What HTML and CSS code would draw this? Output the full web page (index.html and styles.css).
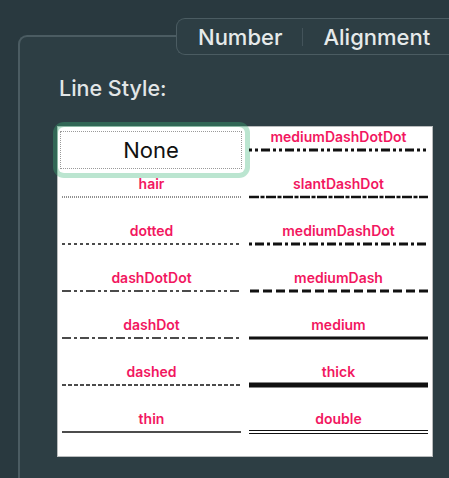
FILE: index.html
```html
<!DOCTYPE html>
<html lang="en">
<head>
  <meta charset="UTF-8" />
  <title>Format Cells - Border</title>
  <link rel="stylesheet" href="styles.css">
</head>
<body>
  <div class="pane">
    <div class="tabs">
      <span class="tab">Number</span>
      <span class="sep"></span>
      <span class="tab">Alignment</span>
    </div>

    <div class="title">Line Style:</div>

    <div class="styles">
      <div class="cell cell-none">
        <button class="none"><span>None</span></button>
      </div>
      <div class="cell">
        <span class="name">mediumDashDotDot</span>
        <svg class="ln mddd" viewBox="0 0 179 6"><line x1="0" y1="3" x2="179" y2="3" /></svg>
      </div>

      <div class="cell">
        <span class="name">hair</span>
        <svg class="ln hair" viewBox="0 0 179 6"><line x1="0" y1="3" x2="179" y2="3" /></svg>
      </div>
      <div class="cell">
        <span class="name">slantDashDot</span>
        <svg class="ln slant" viewBox="0 0 179 6"><line x1="0" y1="3" x2="179" y2="3" /></svg>
      </div>

      <div class="cell">
        <span class="name">dotted</span>
        <svg class="ln dotted" viewBox="0 0 179 6"><line x1="0" y1="3" x2="179" y2="3" /></svg>
      </div>
      <div class="cell">
        <span class="name">mediumDashDot</span>
        <svg class="ln mdd" viewBox="0 0 179 6"><line x1="0" y1="3" x2="179" y2="3" /></svg>
      </div>

      <div class="cell">
        <span class="name">dashDotDot</span>
        <svg class="ln ddd" viewBox="0 0 179 6"><line x1="0" y1="3" x2="179" y2="3" /></svg>
      </div>
      <div class="cell">
        <span class="name">mediumDash</span>
        <svg class="ln mdash" viewBox="0 0 179 6"><line x1="0" y1="3" x2="179" y2="3" /></svg>
      </div>

      <div class="cell">
        <span class="name">dashDot</span>
        <svg class="ln dd" viewBox="0 0 179 6"><line x1="0" y1="3" x2="179" y2="3" /></svg>
      </div>
      <div class="cell">
        <span class="name">medium</span>
        <svg class="ln medium" viewBox="0 0 179 6"><line x1="0" y1="3" x2="179" y2="3" /></svg>
      </div>

      <div class="cell">
        <span class="name">dashed</span>
        <svg class="ln dashed" viewBox="0 0 179 6"><line x1="0" y1="3" x2="179" y2="3" /></svg>
      </div>
      <div class="cell">
        <span class="name">thick</span>
        <svg class="ln thick" viewBox="0 0 179 6"><line x1="0" y1="3" x2="179" y2="3" /></svg>
      </div>

      <div class="cell">
        <span class="name">thin</span>
        <svg class="ln thin" viewBox="0 0 179 6"><line x1="0" y1="3" x2="179" y2="3" /></svg>
      </div>
      <div class="cell">
        <span class="name">double</span>
        <svg class="ln double" viewBox="0 0 179 6">
          <line x1="0" y1="1.5" x2="179" y2="1.5" />
          <line x1="0" y1="4.5" x2="179" y2="4.5" />
        </svg>
      </div>
    </div>
  </div>
</body>
</html>
```

FILE: styles.css
```css
body {
  margin: 0;
  background: #29393f;
  font-family: Inter, 'Noto Sans', sans-serif;
  overflow: hidden;
  height: 478px;
}
/* pane runs off the right and bottom edges of the window */
.pane {
  position: relative;
  margin: 35px 0 0 18px;
  width: 431px;
  height: 443px;
  border: 2px solid #4b5c62;
  border-right: none;
  border-bottom: none;
  border-radius: 9px 0 0 0;
  background: #2d3e44;
  padding: 38px 0 0 38px;
  box-sizing: border-box;
}
/* Tab strip sits over the top edge of the pane */
.tabs {
  position: absolute;
  top: -19px;
  left: 156px;
  right: 0;
  height: 37px;
  box-sizing: border-box;
  padding: 0 0 0 21px;
  display: flex;
  align-items: center;
  gap: 20px;
  border: 1.5px solid #4b5c62;
  border-right: none;
  border-radius: 9px 0 0 9px;
  background: #2d3e44;
}
.tab {
  color: #e6eaea;
  font-size: 22px;
  font-weight: 500;
}
.sep {
  width: 1px;
  height: 18px;
  background: #43535a;
}
.title {
  color: #e2e6e7;
  font-size: 21.5px;
  font-weight: 500;
  line-height: 26px;
  margin-left: 1px;
}
.styles {
  margin: 25px 0 0 -1px;
  width: 376px;
  border: 1px solid #b9bcbd;
  box-sizing: border-box;
  background: #fff;
  display: grid;
  grid-template-columns: 187px 187px;
  grid-auto-rows: 47px;
}
.cell {
  display: flex;
  flex-direction: column;
  align-items: center;
  padding-top: 2px;
  box-sizing: border-box;
}
.name {
  color: #f2175f;
  font-size: 14px;
  font-weight: 600;
  line-height: 16px;
}
.ln {
  width: 179px;
  height: 6px;
  margin-top: 2px;
}
.ln line {
  stroke: #111;
  stroke-width: 1.5;
}
.hair line { stroke-width: 1; stroke-dasharray: 1 1; stroke: #222; }
.dotted line { stroke-dasharray: 3 3; }
.ddd line { stroke-dasharray: 9 3 3 3 3 3; }
.dd line { stroke-dasharray: 9 3 3 3; }
.dashed line { stroke-dasharray: 4 2; }
.thin line { stroke-width: 1.5; }
.mddd line { stroke-width: 3; stroke-dasharray: 3 3 3 3 9 3; }
.slant line { stroke-width: 2.5; stroke-dasharray: 10 1.5 4 1.5; }
.mdd line { stroke-width: 3; stroke-dasharray: 3 3 9 3; }
.mdash line { stroke-width: 3; stroke-dasharray: 9 4; stroke-dashoffset: 12; }
.medium line { stroke-width: 3; }
.thick line { stroke-width: 5; }
.double line { stroke-width: 1.2; }

/* None button with focus ring */
.cell-none {
  padding: 0;
}
.none {
  width: 100%;
  height: 46px;
  margin: 0;
  padding: 4px 3px 4px 2px;
  border: none;
  border-radius: 6px;
  background: #fff;
  box-shadow: 0 0 0 5px rgba(60, 180, 120, 0.35);
  display: flex;
}
.none span {
  flex: 1;
  display: flex;
  align-items: center;
  justify-content: center;
  border: 1.5px dotted #9a9a9a;
  font-family: Inter, sans-serif;
  font-size: 22px;
  color: #111;
}
```
